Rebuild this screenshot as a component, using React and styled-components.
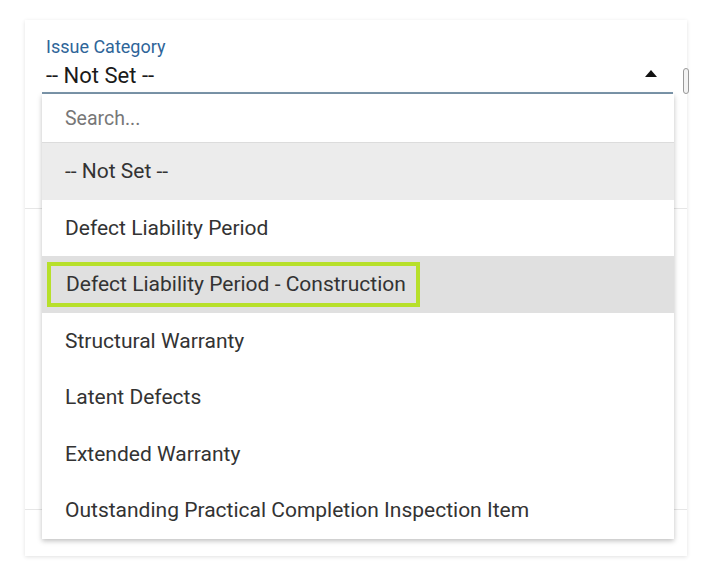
import styled, { createGlobalStyle } from 'styled-components';

const GlobalStyle = createGlobalStyle`
   body {
      margin: 0;
      background: #ffffff;
      font-family: Roboto, "Liberation Sans", sans-serif;
   }
`;

const Page = styled.div`
   width: 711px;
   height: 576px;
   padding: 20px 0 0 25px;
   box-sizing: border-box;
`;

const Card = styled.div`
   position: relative;
   width: 662px;
   height: 536px;
   background: #ffffff;
   box-shadow: 0 1px 4px rgba(0, 0, 0, 0.12);
   display: flex;
   flex-direction: column;
`;

const FieldSection = styled.div`
   height: 189px;
   padding: 17px 14px 0 17px;
   border-bottom: 1px solid #e6e6e6;
   box-sizing: border-box;
`;

const EmptySection = styled.div`
   height: ${(p) => p.h}px;
   border-bottom: ${(p) => (p.last ? 'none' : '1px solid #e6e6e6')};
`;

const Label = styled.div`
   font-size: 18px;
   color: #2e6599;
   padding-left: 4px;
   line-height: 20px;
`;

const SelectBox = styled.div`
   display: flex;
   align-items: center;
   justify-content: space-between;
   height: 37px;
   border-bottom: 2px solid #7c96ab;
   padding: 1px 16px 0 4px;
   box-sizing: border-box;
   font-size: 22px;
   color: #1a1a1a;
`;

const Caret = styled.span`
   width: 0;
   height: 0;
   border-left: 6px solid transparent;
   border-right: 6px solid transparent;
   border-bottom: 7px solid #111;
   margin-bottom: 4px;
`;

const SideTab = styled.div`
   position: absolute;
   right: -2px;
   top: 48px;
   width: 4px;
   height: 24px;
   border: 1px solid #999;
   border-radius: 3px;
   background: #f3f3f3;
`;

const Dropdown = styled.div`
   position: absolute;
   top: 74px;
   left: 17px;
   width: 632px;
   background: #ffffff;
   box-shadow: 0 2px 5px rgba(0, 0, 0, 0.25);
   z-index: 2;
`;

const Search = styled.div`
   height: 48px;
   display: flex;
   align-items: center;
   padding-left: 23px;
   font-size: 19.5px;
   color: #777777;
   border-bottom: 1px solid #dcdcdc;
`;

const Option = styled.div`
   height: 56.5px;
   display: flex;
   align-items: center;
   padding-left: 23px;
   font-size: 21px;
   color: #333333;
   background: ${(p) => (p.selected ? '#ececec' : p.active ? '#e0e0e0' : '#ffffff')};
   box-sizing: border-box;
`;

const Highlight = styled.span`
   margin-left: -18px;
   padding: 6px 10px 7px 15px;
   border: 4px solid #b7e02b;
`;

const options = [
   'Defect Liability Period',
   'Defect Liability Period - Construction',
   'Structural Warranty',
   'Latent Defects',
   'Extended Warranty',
   'Outstanding Practical Completion Inspection Item',
];

const App = () => {
   return (
      <Page>
         <GlobalStyle />
         <Card>
            <FieldSection>
               <Label>Issue Category</Label>
               <SelectBox>
                  <span>-- Not Set --</span>
                  <Caret />
               </SelectBox>
            </FieldSection>
            <EmptySection h={300} />
            <EmptySection h={46} last />
            <SideTab />
            <Dropdown>
               <Search>Search...</Search>
               <Option selected>-- Not Set --</Option>
               {options.map((o, i) => (
                  <Option key={o} active={i === 1}>
                     {i === 1 ? <Highlight>{o}</Highlight> : o}
                  </Option>
               ))}
            </Dropdown>
         </Card>
      </Page>
   );
};

export default App;
